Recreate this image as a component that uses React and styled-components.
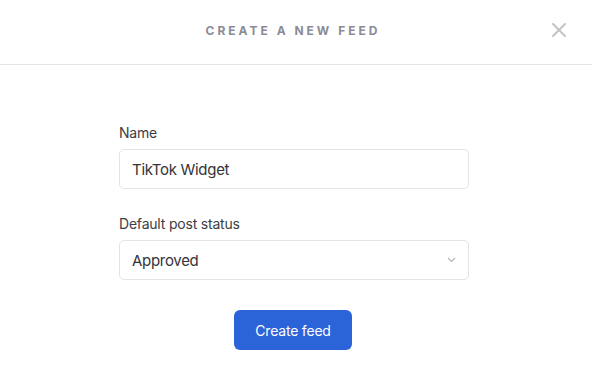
import React, { useEffect, useRef, useState } from "react";
import styled, { createGlobalStyle } from "styled-components";

const GlobalStyle = createGlobalStyle`
  html, body {
    margin: 0;
    padding: 0;
    background: #ffffff;
  }
  body {
    font-family: Inter, "Noto Sans", sans-serif;
    -webkit-font-smoothing: antialiased;
  }
  * {
    box-sizing: border-box;
  }
`;

const App = () => {
  const [name, setName] = useState("TikTok Widget");
  const [status, setStatus] = useState("approved");
  const nameRef = useRef(null);

  useEffect(() => {
    const el = nameRef.current;
    if (el) {
      el.focus();
      el.setSelectionRange(el.value.length, el.value.length);
    }
  }, []);

  return (
    <>
      <GlobalStyle />
      <Modal>
        <Header>
          <Title>Create a new feed</Title>
          <CloseButton aria-label="Close">
            <svg width="14" height="14" viewBox="0 0 14 14">
              <path
                d="M1 1 L13 13 M13 1 L1 13"
                stroke="#c4c4c6"
                strokeWidth="2"
                strokeLinecap="round"
              />
            </svg>
          </CloseButton>
        </Header>

        <Body>
          <Field>
            <Label htmlFor="feed-name">Name</Label>
            <TextInput
              id="feed-name"
              ref={nameRef}
              value={name}
              onChange={e => setName(e.target.value)}
            />
          </Field>

          <Field>
            <Label htmlFor="feed-status">Default post status</Label>
            <SelectWrapper>
              <Select
                id="feed-status"
                value={status}
                onChange={e => setStatus(e.target.value)}
              >
                <option value="approved">Approved</option>
                <option value="pending">Pending</option>
                <option value="rejected">Rejected</option>
              </Select>
              <Chevron width="9" height="6" viewBox="0 0 9 6">
                <path
                  d="M1 1 L4.5 4.5 L8 1"
                  fill="none"
                  stroke="#b5b5b9"
                  strokeWidth="1.2"
                />
              </Chevron>
            </SelectWrapper>
          </Field>

          <Actions>
            <PrimaryButton>Create feed</PrimaryButton>
          </Actions>
        </Body>
      </Modal>
    </>
  );
};

const Modal = styled.div`
  width: 592px;
  height: 375px;
  background: #ffffff;
  display: flex;
  flex-direction: column;
`;

const Header = styled.div`
  position: relative;
  height: 65px;
  padding: 0 6px 4px 0;
  border-bottom: 1px solid #e6e6e8;
  display: flex;
  align-items: center;
  justify-content: center;
  flex-shrink: 0;
`;

const Title = styled.h2`
  margin: 0;
  font-size: 12px;
  font-weight: 700;
  letter-spacing: 3px;
  text-transform: uppercase;
  color: #8b8b96;
`;

const CloseButton = styled.button`
  position: absolute;
  right: 26px;
  top: 23px;
  width: 14px;
  height: 14px;
  padding: 0;
  border: none;
  background: none;
  display: flex;
  cursor: pointer;
`;

const Body = styled.div`
  width: 350px;
  margin-left: calc(50% - 177px);
  padding-top: 59px;
  display: flex;
  flex-direction: column;
`;

const Field = styled.div`
  display: flex;
  flex-direction: column;
  margin-bottom: 26px;
`;

const Label = styled.label`
  font-size: 14px;
  line-height: 18px;
  color: #3d3d42;
  letter-spacing: -0.2px;
  margin-bottom: 7px;
`;

const TextInput = styled.input`
  height: 40px;
  width: 100%;
  padding: 0 12px;
  border: 1px solid #e4e4e7;
  border-radius: 5px;
  font-family: Inter, "Noto Sans", sans-serif;
  font-size: 15px;
  letter-spacing: -0.3px;
  color: #333338;
  caret-color: #111;
  outline: none;
  background: #ffffff;
`;

const SelectWrapper = styled.div`
  position: relative;
`;

const Select = styled.select`
  appearance: none;
  height: 40px;
  width: 100%;
  padding: 0 12px;
  border: 1px solid #e4e4e7;
  border-radius: 5px;
  font-family: Inter, "Noto Sans", sans-serif;
  font-size: 15px;
  letter-spacing: -0.3px;
  color: #333338;
  background: #ffffff;
  outline: none;
`;

const Chevron = styled.svg`
  position: absolute;
  right: 13px;
  top: 17px;
  pointer-events: none;
`;

const Actions = styled.div`
  display: flex;
  justify-content: center;
  padding-top: 4px;
  padding-right: 2px;
`;

const PrimaryButton = styled.button`
  height: 40px;
  padding: 0 21px;
  border: none;
  border-radius: 6px;
  background: #2b63d9;
  color: #ffffff;
  font-family: Inter, "Noto Sans", sans-serif;
  font-size: 14px;
  letter-spacing: -0.2px;
  cursor: pointer;
`;

export default App;
